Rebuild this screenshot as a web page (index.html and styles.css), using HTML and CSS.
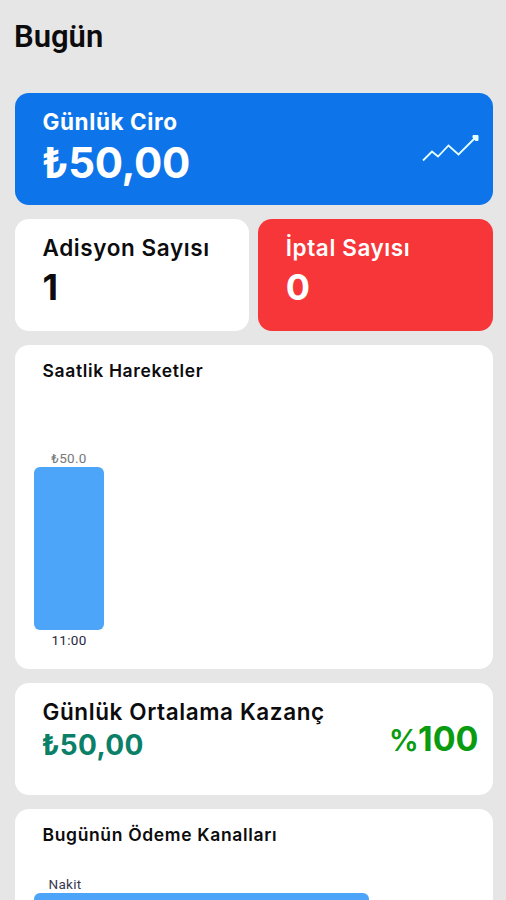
FILE: index.html
```html
<!DOCTYPE html>
<html lang="tr">
<head>
  <meta charset="UTF-8">
  <title>Bugün</title>
  <link rel="stylesheet" href="styles.css">
</head>
<body>
  <h1>Bugün</h1>

  <div class="cards">
    <div class="card revenue">
      <div>
        <h2>Günlük Ciro</h2>
        <p class="amount">₺50,00</p>
      </div>
      <svg class="trend" width="58" height="30" viewBox="0 0 58 30" fill="none" stroke="#e3ffff" stroke-width="1.8">
        <path d="M2 27.5 L11 18.5 L17 23.5 L27.5 12.5 L37.5 21.5 L54 5" />
        <path d="M52 2.5 H57 V7.5 H54.5 L52 5 Z" fill="#e3ffff" stroke-width="1" />
      </svg>
    </div>

    <div class="card-row">
      <div class="card bills">
        <h2>Adisyon Sayısı</h2>
        <p class="count">1</p>
      </div>
      <div class="card cancels">
        <h2>İptal Sayısı</h2>
        <p class="count">0</p>
      </div>
    </div>

    <div class="card hourly">
      <h3>Saatlik Hareketler</h3>
      <div class="chart">
        <span class="bar-value">₺50.0</span>
        <div class="bar"></div>
        <span class="bar-hour">11:00</span>
      </div>
    </div>

    <div class="card average">
      <div>
        <h2>Günlük Ortalama Kazanç</h2>
        <p class="earning">₺50,00</p>
      </div>
      <span class="percent"><span class="sign">%</span>100</span>
    </div>

    <div class="card payments">
      <h3>Bugünün Ödeme Kanalları</h3>
      <span class="channel">Nakit</span>
      <div class="channel-bar"></div>
    </div>
  </div>
</body>
</html>
```
FILE: styles.css
```css
* {
  box-sizing: border-box;
}

body {
  display: flex;
  flex-direction: column;
  margin: 0;
  height: 100vh;
  background-color: #e6e6e6;
  color: #0c0c0e;
  font-family: Inter, "Open Sans", sans-serif;
}

h1, h2, h3, p {
  margin: 0;
  white-space: nowrap;
}

h1 {
  height: 92.7px;
  padding: 19px 0 0 14px;
  font-family: Roboto, sans-serif;
  font-size: 31px;
  font-weight: 600;
  line-height: 36px;
}

h2 {
  font-size: 22.5px;
  font-weight: 600;
  line-height: 29px;
  letter-spacing: 0.6px;
}

h3 {
  font-size: 17.5px;
  font-weight: 600;
  line-height: 24px;
  letter-spacing: 0.65px;
}

.cards {
  display: flex;
  flex: 1;
  flex-direction: column;
  gap: 14.3px;
  min-height: 0;
  padding: 0 13.5px 0 14.5px;
}

.card {
  height: 112px;
  padding: 14px 14px 0 28px;
  border-radius: 14px;
  background-color: #fff;
}

.card-row {
  display: grid;
  grid-template-columns: 1fr 1fr;
  gap: 8.5px;
}

.revenue,
.average {
  display: flex;
  justify-content: space-between;
}

.revenue {
  background-color: #0d75e9;
  color: #fff;
}

.revenue h2 {
  font-weight: 700;
}

.amount {
  margin-left: -1px;
  font-size: 42px;
  font-weight: 700;
  line-height: 53px;
  letter-spacing: -0.3px;
}

.trend {
  margin-top: 26px;
}

.cancels {
  background-color: #f63639;
  color: #fff;
}

.count {
  font-size: 36px;
  font-weight: 700;
  line-height: 50px;
}

.card.hourly {
  height: 323.5px;
  padding-left: 19.5px;
}

.hourly h3,
.payments h3 {
  padding-left: 8.5px;
}

.chart {
  display: flex;
  flex-direction: column;
  width: 70px;
  margin-top: 66px;
  font-family: Roboto, sans-serif;
  font-size: 13.5px;
  line-height: 18px;
  letter-spacing: 0.3px;
  text-align: center;
}

.bar-value {
  color: #77777a;
}

.bar {
  height: 162.5px;
  border-radius: 6px;
  background-color: #4da5f9;
}

.bar-hour {
  margin-top: 1px;
  color: #27273f;
}

.earning {
  margin-left: -1px;
  color: #0b8068;
  font-size: 28px;
  font-weight: 700;
  line-height: 39px;
  letter-spacing: 0.3px;
}

.percent {
  margin-top: 20px;
  color: #0a9b10;
  font-size: 34px;
  font-weight: 700;
  line-height: 43px;
}

.sign {
  font-size: 30px;
  font-weight: 600;
  letter-spacing: -1px;
}

.card.payments {
  flex: 1;
  min-height: 0;
  padding-left: 19.5px;
  border-radius: 14px 14px 0 0;
}

.channel {
  display: block;
  margin: 29px 0 0 14.5px;
  color: #38384e;
  font-family: Roboto, sans-serif;
  font-size: 13.5px;
  line-height: 16px;
  letter-spacing: 0.3px;
}

.channel-bar {
  width: 334.5px;
  height: 6.5px;
  margin-top: 1px;
  border-radius: 6px 6px 0 0;
  background-color: #4da5f9;
}
```
